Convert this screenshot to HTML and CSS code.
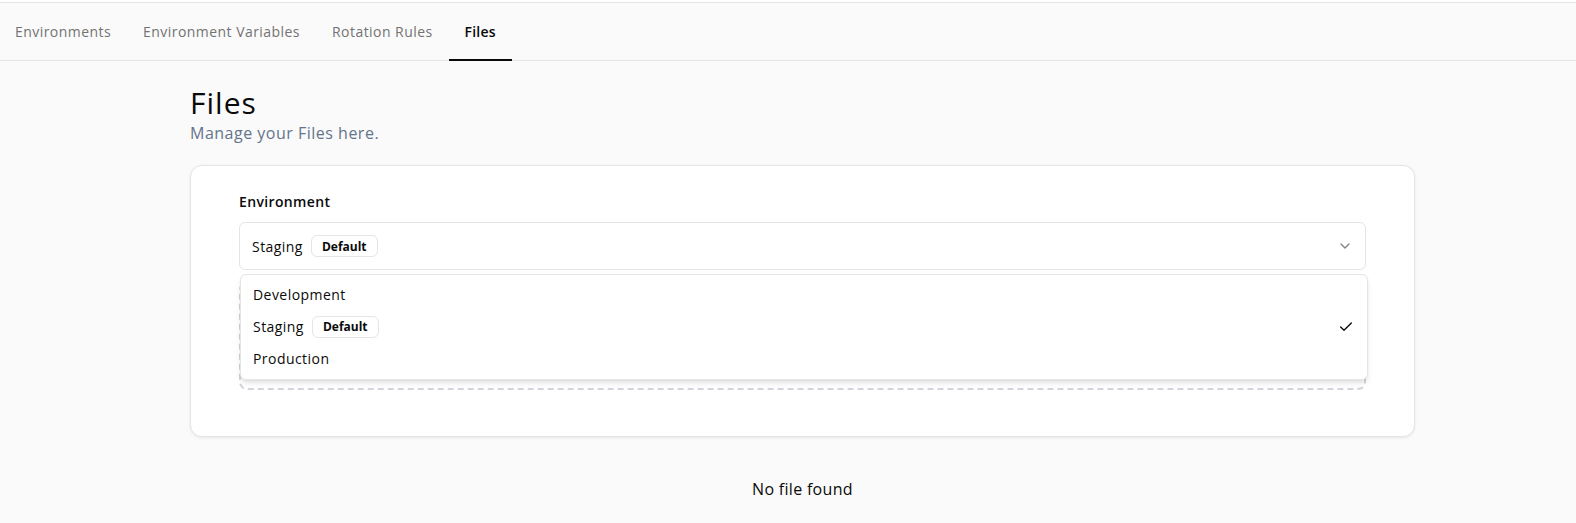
FILE: index.html
```html
<!DOCTYPE html>
<html lang="en">
<head>
<meta charset="utf-8">
<title>Files</title>
<link rel="stylesheet" href="styles.css">
</head>
<body>
<div class="topstrip"></div>
<nav class="tabs">
  <a class="tab">Environments</a>
  <a class="tab">Environment Variables</a>
  <a class="tab">Rotation Rules</a>
  <a class="tab active">Files</a>
</nav>
<main class="main">
  <h1 class="title">Files</h1>
  <p class="subtitle">Manage your Files here.</p>
  <section class="card">
    <div class="label">Environment</div>
    <div class="field">
      <div class="select">
        <span class="select-value">Staging <span class="badge">Default</span></span>
        <svg class="chev" viewBox="0 0 24 24" width="16" height="16" fill="none" stroke="currentColor" stroke-width="2" stroke-linecap="round" stroke-linejoin="round"><path d="m6 9 6 6 6-6"/></svg>
      </div>
      <div class="menu">
        <div class="item">Development</div>
        <div class="item">Staging <span class="badge">Default</span>
          <svg class="check" viewBox="0 0 24 24" width="16" height="16" fill="none" stroke="currentColor" stroke-width="2" stroke-linecap="round" stroke-linejoin="round"><path d="M20 6 9 17l-5-5"/></svg>
        </div>
        <div class="item">Production</div>
      </div>
    </div>
    <div class="dropzone"></div>
  </section>
  <p class="empty">No file found</p>
</main>
</body>
</html>
```

FILE: styles.css
```css
* { box-sizing: border-box; }
html, body { overflow: hidden; }
body {
  margin: 0;
  background: #fafafa;
  font-family: "Open Sans", "Noto Sans", sans-serif;
  color: #0a0a0a;
}
.topstrip {
  height: 3px;
  background: #ffffff;
  border-bottom: 1px solid #e5e5e5;
}
.tabs {
  display: flex;
  height: 58px;
  border-bottom: 1px solid #e5e5e5;
}
.tab {
  display: flex;
  align-items: center;
  padding: 0 16px;
  font-size: 14px;
  font-weight: 500;
  letter-spacing: 0.45px;
  color: #737373;
  border-bottom: 2px solid transparent;
  margin-bottom: -1px;
}
.tab:first-child { padding-left: 15px; }
.tab.active {
  color: #0a0a0a;
  font-weight: 600;
  letter-spacing: 0.2px;
  border-bottom-color: #0a0a0a;
}
.main {
  width: 1225px;
  margin-left: 190px;
  padding-top: 24px;
}
.title {
  margin: 0;
  font-size: 30px;
  line-height: 36px;
  font-weight: 500;
  letter-spacing: 1px;
}
.subtitle {
  margin: 0;
  font-size: 16px;
  line-height: 24px;
  letter-spacing: 0.5px;
  color: #64748b;
}
.card {
  margin-top: 20px;
  background: #ffffff;
  border: 1px solid #e5e5e5;
  border-radius: 12px;
  box-shadow: 0 1px 3px rgba(0,0,0,0.08);
  padding: 26px 48px 46px 48px;
}
.label {
  font-size: 14px;
  line-height: 20px;
  font-weight: 600;
  letter-spacing: 0.35px;
  margin-bottom: 10px;
}
.field {
  position: relative;
}
.select {
  height: 48px;
  border: 1px solid #e5e5e5;
  border-radius: 6px;
  display: flex;
  align-items: center;
  justify-content: space-between;
  padding: 0 12px;
  font-size: 14px;
  letter-spacing: 0.45px;
}
.select-value, .item {
  display: flex;
  align-items: center;
  gap: 8px;
}
.badge {
  display: inline-flex;
  align-items: center;
  height: 22px;
  padding: 0 10px;
  border: 1px solid #e5e5e5;
  border-radius: 6px;
  font-size: 12px;
  font-weight: 700;
  letter-spacing: 0;
  color: #0a0a0a;
}
.chev {
  color: #0a0a0a;
  opacity: 0.5;
}
.menu {
  position: absolute;
  top: 52px;
  left: 1px;
  right: -2px;
  z-index: 5;
  background: #ffffff;
  border: 1px solid #e5e5e5;
  border-radius: 6px;
  box-shadow: 0 4px 6px -1px rgba(0,0,0,0.1), 0 2px 4px -2px rgba(0,0,0,0.1);
  padding: 4px;
}
.item {
  height: 32px;
  padding: 0 8px 1px 8px;
  font-size: 14px;
  letter-spacing: 0.45px;
  position: relative;
}
.check {
  position: absolute;
  right: 9px;
  top: 8px;
}
.dropzone {
  margin-top: 12px;
  height: 108px;
  border: 2px dashed #d4d4dc;
  border-radius: 8px;
}
.empty {
  margin: 40px 0 0 0;
  text-align: center;
  font-size: 16px;
  line-height: 24px;
  letter-spacing: 0.3px;
}
```
